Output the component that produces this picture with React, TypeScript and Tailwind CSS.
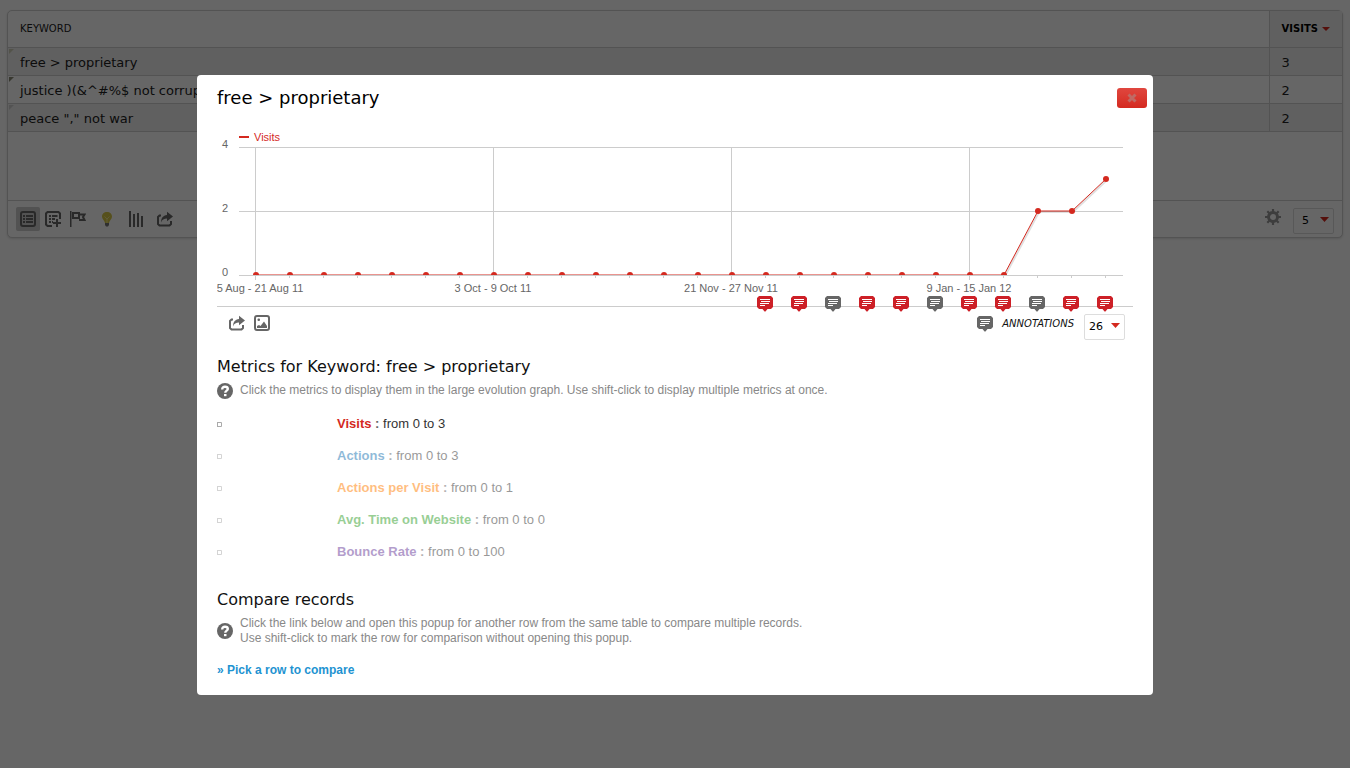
import React from "react";

const keywords = [
  { name: "free > proprietary", visits: 3, corner: "#d0d0b8" },
  { name: "justice )(&^#%$ not corruption", visits: 2, corner: "#8c8c78" },
  { name: 'peace "," not war', visits: 2, corner: "#d0d0d0" },
];

const visitSeries = [...Array(23).fill(0), 2, 2, 3] as number[];

const xLabels = [
  { x: 43, text: "5 Aug - 21 Aug 11" },
  { x: 276, text: "3 Oct - 9 Oct 11" },
  { x: 514, text: "21 Nov - 27 Nov 11" },
  { x: 752, text: "9 Jan - 15 Jan 12" },
];

const annotations = [true, true, false, true, true, false, true, true, false, true, true];

const metrics = [
  { name: "Visits", from: 0, to: 3, color: "text-[#d4291f]", active: true },
  { name: "Actions", from: 0, to: 3, color: "text-[#1f78b4]", active: false },
  { name: "Actions per Visit", from: 0, to: 1, color: "text-[#ff7f00]", active: false },
  { name: "Avg. Time on Website", from: 0, to: 0, color: "text-[#33a02c]", active: false },
  { name: "Bounce Rate", from: 0, to: 100, color: "text-[#6a3d9a]", active: false },
];

function ShareIcon() {
  return (
    <svg width="16" height="16" viewBox="0 0 16 16" fill="none" aria-hidden="true">
      <path d="M4 4.500H2.500L1 6v7l1.500 1.500h10L14 13v-3" stroke="#666" strokeWidth="2" />
      <path d="M4 11.500C4 7 6 4.500 10 4V.8L16 5.500l-6 4.700V7.500C7 7.500 5 8.500 4 11.500z" fill="#666" />
    </svg>
  );
}

function ImageIcon() {
  return (
    <svg width="16" height="16" viewBox="0 0 16 16" fill="none" aria-hidden="true">
      <rect x="1" y="1" width="14" height="14" rx="2" stroke="#666" strokeWidth="2" />
      <path d="M3 13v-2l2-1 1.500 1L10 6.500 13 11v2z" fill="#666" />
      <rect x="3.500" y="3.500" width="2.500" height="2.500" rx="1" fill="#666" />
    </svg>
  );
}

function TableIcon() {
  return (
    <svg width="16" height="16" viewBox="0 0 16 16" fill="none" aria-hidden="true">
      <rect x="1" y="1" width="14" height="14" rx="2" stroke="#666" strokeWidth="2" />
      <path d="M3 5h2M3 8h2M3 11h2M6 5h7M6 8h7M6 11h7" stroke="#666" strokeWidth="2" />
    </svg>
  );
}

function TableMoreIcon() {
  return (
    <svg width="16" height="16" viewBox="0 0 16 16" fill="none" aria-hidden="true">
      <path d="M7 15H2.500L1 13.500v-11L2.500 1h11L15 2.500V8" stroke="#666" strokeWidth="2" />
      <path d="M4 5h2M4 8h2M4 11h2M7 5h5.500M7 8h3M7 11h1" stroke="#666" strokeWidth="2" />
      <path d="M12 8v8M8 12h8" stroke="#666" strokeWidth="2" />
    </svg>
  );
}

function FlagIcon() {
  return (
    <svg width="16" height="16" viewBox="0 0 16 16" fill="none" aria-hidden="true">
      <path d="M.5 0v16" stroke="#666" strokeWidth="2" />
      <path d="M3 2h6v5H3z" stroke="#666" strokeWidth="2" />
      <path d="M9 3.500h5.500L13 6l1.500 3H9" stroke="#666" strokeWidth="2" />
    </svg>
  );
}

function BulbIcon() {
  return (
    <svg width="16" height="16" viewBox="0 0 16 16" fill="none" aria-hidden="true">
      <path d="M8 1C5 1 3 3 3 5.700 3 8 5.500 9.500 6 12h4c.5-2.500 3-4 3-6.300C13 3 11 1 8 1z" fill="#d8c848" />
      <path d="M5.500 5.500 8 8l2.500-2.500M8 8v4" stroke="#f0e68c" />
      <path d="M6 12h4v2L9 15.500H7L6 14z" fill="#777" />
    </svg>
  );
}

function BarsIcon() {
  return (
    <svg width="16" height="16" viewBox="0 0 16 16" aria-hidden="true">
      <path d="M1 0h2v16H1zM5 3h2v13H5zM9 2h2v14H9zM13 5h2v11h-2z" fill="#666" />
    </svg>
  );
}

function GearIcon() {
  return (
    <svg width="16" height="16" viewBox="0 0 16 16" fill="none" stroke="#999" aria-hidden="true">
      <circle cx="8" cy="8" r="4.500" strokeWidth="3" />
      <path
        d="M8 0v3M8 13v3M0 8h3M13 8h3M2.300 2.300l2 2M11.700 11.700l2 2M13.700 2.300l-2 2M4.300 11.700l-2 2"
        strokeWidth="2.200"
      />
    </svg>
  );
}

function HelpIcon() {
  return (
    <svg className="shrink-0" width="16" height="16" viewBox="0 0 16 16" fill="none" aria-hidden="true">
      <circle cx="8" cy="8" r="8" fill="#666" />
      <path d="M5.200 6.500C5.200 4.500 6.300 3.800 8 3.800s2.800.8 2.800 2.200c0 1.700-2.500 1.600-2.500 3.800" stroke="#fff" strokeWidth="2.400" />
      <path d="M7 11h2.500v2.200H7z" fill="#fff" />
    </svg>
  );
}

function NoteIcon({ starred = false }: { starred?: boolean }) {
  return (
    <svg className="block" width="16" height="16" viewBox="0 0 16 16" aria-hidden="true">
      <path
        d="M2 0h12l2 2v9l-2 2h-3.500L8.500 15.500h-1L5.500 13H2l-2-2V2z"
        fill={starred ? "#cd2027" : "#666"}
      />
      <path d="M3 3h10v1H3zM4 5h9v1H4zM3 7h9v1H3zM3 9h5v1H3z" fill="#fff" />
    </svg>
  );
}

function DownArrow() {
  return (
    <svg className="block" width="9" height="5" viewBox="0 0 9 5" aria-hidden="true">
      <path d="M0 0h9L4.500 5z" fill="#d4291f" />
    </svg>
  );
}

function LimitSelect({ label, value, options }: { label: string; value: string; options: string[] }) {
  return (
    <div className="relative h-[26px] w-[41px]">
      <select
        aria-label={label}
        defaultValue={value}
        className={`h-full w-full appearance-none rounded-[2px] border border-[#ddd] bg-transparent text-[11px] text-black outline-none ${
          value.length > 1 ? "pl-1" : "pl-2"
        }`}
      >
        {options.map((o) => (
          <option key={o}>{o}</option>
        ))}
      </select>
      <span className="pointer-events-none absolute right-[5px] top-[10px]">
        <DownArrow />
      </span>
    </div>
  );
}

function ToolButton({ label, active, children }: { label: string; active?: boolean; children: React.ReactNode }) {
  return (
    <button
      aria-label={label}
      className={`flex size-6 items-center justify-center rounded-[2px] ${active ? "bg-[#ccc]" : ""}`}
    >
      {children}
    </button>
  );
}

function KeywordReport() {
  return (
    <section className="mx-[7px] rounded-[5px] border border-[#d0d0d0] bg-white shadow-sm">
      <table className="w-full border-collapse text-left text-[13px] text-[#222]">
        <thead>
          <tr className="h-9 border-b border-[#d0d0d0] text-[10px] uppercase">
            <th className="pl-3 font-normal">Keyword</th>
            <th className="w-[73px] border-l border-[#d0d0d0] bg-[#f0f0f0] pl-3 text-black">
              <span className="flex items-center gap-1">
                Visits
                <svg width="8" height="4" viewBox="0 0 8 4" aria-hidden="true">
                  <path d="M0 0h8L4 4z" fill="#d4291f" />
                </svg>
              </span>
            </th>
          </tr>
        </thead>
        <tbody>
          {keywords.map((k, i) => (
            <tr key={k.name} className={`h-7 border-b border-[#d0d0d0] ${i % 2 === 0 ? "bg-[#f0f0f0]" : ""}`}>
              <td className="relative pl-3 pt-[3px]">
                <svg className="absolute left-px top-px" width="5" height="5" viewBox="0 0 5 5" aria-hidden="true">
                  <path d="M0 0h5L0 5z" fill={k.corner} />
                </svg>
                {k.name}
              </td>
              <td className="border-l border-[#d0d0d0] pl-3 pt-[3px]">{k.visits}</td>
            </tr>
          ))}
        </tbody>
      </table>
      <footer className="mt-[68px] flex items-start justify-between border-t border-[#d0d0d0] pb-1 pl-2 pr-2 pt-[6px]">
        <div className="flex items-center">
          <ToolButton label="Display simple table" active><TableIcon /></ToolButton>
          <div className="flex gap-1 pl-px">
            <ToolButton label="Display more metrics"><TableMoreIcon /></ToolButton>
            <div className="-ml-[3px] flex gap-[5px]">
              <ToolButton label="Display goals"><FlagIcon /></ToolButton>
              <ToolButton label="Insights"><BulbIcon /></ToolButton>
              <ToolButton label="Charts"><BarsIcon /></ToolButton>
              <ToolButton label="Export"><ShareIcon /></ToolButton>
            </div>
          </div>
        </div>
        <div className="flex items-start gap-3">
          <button aria-label="Configure report" className="pt-[2px]"><GearIcon /></button>
          <LimitSelect label="Rows to display" value="5" options={["5", "10", "25", "50", "100"]} />
        </div>
      </footer>
    </section>
  );
}

function EvolutionChart() {
  const px = (i: number) => 39 + i * 34;
  const py = (v: number) => 145 - v * 32;
  const line = visitSeries.map((v, i) => `${px(i)},${py(v)}`).join(" ");
  return (
    <svg
      className="block h-auto w-full font-['Liberation_Sans',sans-serif]"
      viewBox="0 0 916 166"
      role="img"
      aria-label="Visits evolution graph"
    >
      <defs>
        <clipPath id="plot-area">
          <rect x="22" y="0" width="894" height="145" />
        </clipPath>
      </defs>
      <path d="M22 7h10" stroke="#d4291f" strokeWidth="2" />
      <text x="37" y="11" fontSize="11" fill="#d4291f">Visits</text>
      <g shapeRendering="crispEdges" stroke="#ccc">
        {[0, 2, 4].map((v) => (
          <path key={v} d={`M22 ${145.5 - v * 32}h884`} />
        ))}
        {visitSeries.map((_, i) => (
          <path key={i} d={i % 7 === 0 ? `M${px(i) - 0.5} 17v133` : `M${px(i) - 0.5} 145v3`} />
        ))}
      </g>
      <g fontSize="11" fill="#666">
        {[0, 2, 4].map((v) => (
          <text key={v} x="11" y={146 - v * 32} textAnchor="end">{v}</text>
        ))}
        {xLabels.map((l) => (
          <text key={l.text} x={l.x} y="162" textAnchor="middle">{l.text}</text>
        ))}
      </g>
      <g clipPath="url(#plot-area)">
        <polyline points={line} transform="translate(1 1)" fill="none" stroke="#000" strokeOpacity=".12" strokeWidth="2" />
        <polyline points={line} fill="none" stroke="#d4291f" />
        {visitSeries.map((v, i) => (
          <circle key={i} cx={px(i)} cy={py(v)} r="3" fill="#d4291f" />
        ))}
      </g>
    </svg>
  );
}

function Heading({ children }: { children: React.ReactNode }) {
  return <h2 className="text-[16px] leading-5 text-[#111]">{children}</h2>;
}

function RowEvolutionDialog() {
  return (
    <div
      role="dialog"
      aria-labelledby="dialog-title"
      className="w-[956px] max-w-full rounded-[4px] bg-white pb-4 pl-5 pr-5 font-['Liberation_Sans',Arial,sans-serif]"
    >
      <div className="-mr-[14px] flex items-center justify-between pt-[13px] font-['DejaVu_Sans',sans-serif]">
        <h1 id="dialog-title" className="text-[18px] leading-5 text-black">free &gt; proprietary</h1>
        <button
          aria-label="Close"
          className="flex h-5 w-[30px] items-center justify-center rounded-[3px] bg-linear-to-b from-[#e0463e] to-[#d4291f]"
        >
          <svg width="10" height="10" viewBox="0 0 10 10" aria-hidden="true">
            <path d="M1.500 1.500l7 7M8.500 1.500l-7 7" stroke="#c06a64" strokeWidth="3" />
          </svg>
        </button>
      </div>

      <div className="pt-[22px]">
        <EvolutionChart />
        <div className="relative h-[11px] border-b border-[#ccc]">
          <div className="absolute right-5 top-0 flex gap-[18px]">
            {annotations.map((starred, i) => (
              <button key={i} aria-label="View annotations"><NoteIcon starred={starred} /></button>
            ))}
          </div>
        </div>
        <div className="flex items-start justify-between pl-3 pr-2 pt-[6px] font-['DejaVu_Sans',sans-serif]">
          <div className="flex gap-[9px] pt-[2px]">
            <button aria-label="Export"><ShareIcon /></button>
            <button aria-label="Export as image"><ImageIcon /></button>
          </div>
          <div className="flex items-start gap-[10px]">
            <button className="flex items-center gap-[9px] pt-[2px] text-[10px] leading-4 italic text-[#111]">
              <NoteIcon />
              <span className="pt-px">ANNOTATIONS</span>
            </button>
            <LimitSelect label="Periods to plot" value="26" options={["26", "30", "60", "90"]} />
          </div>
        </div>
      </div>

      <div className="pt-[18px] font-['DejaVu_Sans',sans-serif]">
        <Heading>Metrics for Keyword: free &gt; proprietary</Heading>
      </div>
      <div className="flex items-start gap-[7px] pt-[6px]">
        <HelpIcon />
        <p className="text-[12px] leading-[15px] text-[#888]">
          Click the metrics to display them in the large evolution graph. Use shift-click to display multiple metrics at once.
        </p>
      </div>
      <ul className="pt-[9px]">
        {metrics.map((m) => (
          <li key={m.name}>
            <button className={`flex h-8 w-full items-center text-left text-[13px] text-[#333] ${m.active ? "" : "opacity-50"}`}>
              <span className="w-[120px]">
                <svg width="5" height="5" viewBox="0 0 5 5" fill="none" stroke="#aaa" aria-hidden="true">
                  <path d="M0 .5h4.500v4H0M.5 1v3" />
                </svg>
              </span>
              <span>
                <b className={m.color}>{m.name}</b> <b className="text-[#666]">:</b> from {m.from} to {m.to}
              </span>
            </button>
          </li>
        ))}
      </ul>

      <div className="pt-[22px] font-['DejaVu_Sans',sans-serif]">
        <Heading>Compare records</Heading>
      </div>
      <div className="flex items-center gap-[7px] pt-[6px]">
        <HelpIcon />
        <p className="text-[12px] leading-[15px] text-[#888]">
          Click the link below and open this popup for another row from the same table to compare multiple records.
          <br />
          Use shift-click to mark the row for comparison without opening this popup.
        </p>
      </div>
      <a href="#compare" className="mt-[15px] block w-fit text-[12px] leading-[18px] font-bold text-[#1e93d1]">
        » Pick a row to compare
      </a>
    </div>
  );
}

export default function App() {
  return (
    <div className="min-h-screen bg-white pt-[10px] font-['DejaVu_Sans',sans-serif]">
      <KeywordReport />
      <div className="fixed inset-0 flex items-start justify-center overflow-auto bg-black/60 pt-[75px]">
        <RowEvolutionDialog />
      </div>
    </div>
  );
}
